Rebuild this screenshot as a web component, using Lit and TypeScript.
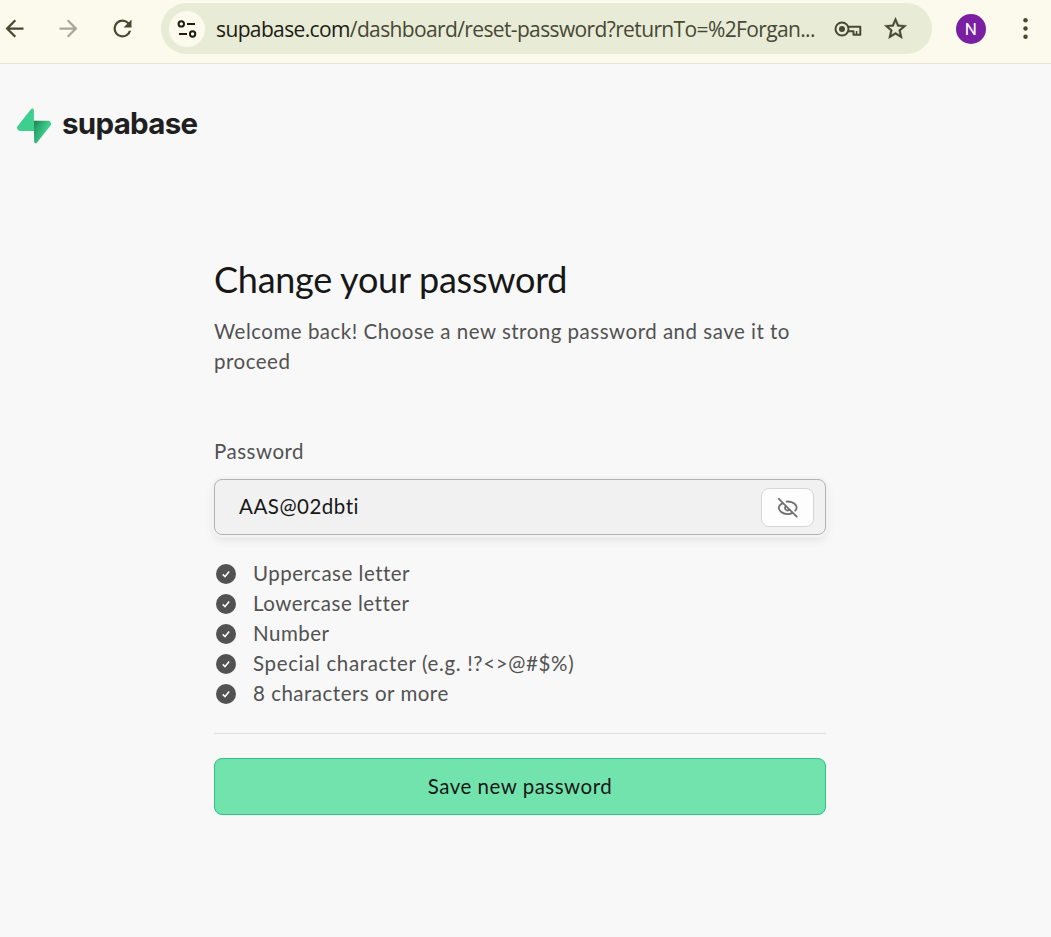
import { LitElement, html, css, svg } from "lit";
import { customElement } from "lit/decorators.js";

const icon = (size: number, body: unknown) =>
  html`<svg width=${size} height=${size} viewBox="0 0 24 24">${body}</svg>`;

@customElement("browser-bar")
class BrowserBar extends LitElement {
  static styles = css`
    :host {
      display: flex;
      align-items: center;
      height: 64px;
      padding: 0 12px 6px 0;
      border-bottom: 1px solid #e6e4d2;
      background: #fcfaec;
      color: #464a30;
    }
    svg { display: block; fill: currentColor; flex: none; }
    .nav { display: flex; gap: 27px; padding-left: 0.5px; }
    .muted { color: #a8a898; }
    .pill {
      display: flex;
      flex: none;
      align-items: center;
      box-sizing: border-box;
      width: 771px;
      height: 51px;
      margin: 0 0 0 25.5px;
      padding: 0 22px 0 8px;
      border-radius: 26px;
      background: #e8ebd6;
      color: #474836;
    }
    .site {
      display: grid;
      place-items: center;
      width: 36px;
      height: 36px;
      border-radius: 50%;
      background: #fcfaec;
      color: #1d1d14;
      margin-right: 11px;
    }
    .url {
      flex: none;
      width: 618px;
      white-space: nowrap;
      font: 21px/30px "Open Sans", "Noto Sans", sans-serif;
      letter-spacing: -0.63px;
    }
    .host { color: #1c1c14; }
    .key { margin-right: 20px; }
    .avatar {
      display: grid;
      place-items: center;
      flex: none;
      width: 30px;
      height: 30px;
      margin-left: 24px;
      border-radius: 50%;
      background: #7b1fa2;
      color: #fff;
      font: 17px/30px Roboto, sans-serif;
    }
    .menu { margin-left: 25.5px; }
    .nav, .menu { padding-top: 0.5px; }
    .avatar { margin-top: 1px; }
  `;
  render() {
    return html`
      <div class="nav">
        ${icon(27, svg`<path d="M20 11H7.83l5.59-5.59L12 4l-8 8 8 8 1.41-1.41L7.83 13H20v-2z"/>`)}
        <span class="muted">${icon(27, svg`<path d="M12 4l-1.41 1.41L16.17 11H4v2h12.17l-5.58 5.59L12 20l8-8z"/>`)}</span>
        ${icon(27, svg`<path d="M17.65 6.35A7.96 7.96 0 0 0 12 4a8 8 0 1 0 7.73 10h-2.08A6 6 0 1 1 12 6c1.66 0 3.14.69 4.22 1.78L13 11h7V4z"/>`)}
      </div>
      <div class="pill">
        <span class="site">
          <svg width="20" height="18" viewBox="0 0 20 18" fill="none" stroke="currentColor" stroke-width="2">
            <circle cx="4.3" cy="3.9" r="2.7" style="fill:none"></circle>
            <path d="M10 3.9h8M2 14h8"></path>
            <circle cx="15.6" cy="14" r="2.7" style="fill:none"></circle>
          </svg>
        </span>
        <span class="url"><span class="host">supabase.com</span>/dashboard/reset-password?returnTo=%2Forgan...</span>
        <svg class="key" width="28" height="18" viewBox="0 0 28 18">
          <circle cx="8" cy="9" r="6.5" style="fill:none" stroke="currentColor" stroke-width="2"></circle>
          <circle cx="8" cy="9" r="3"></circle>
          <path d="M14 6.7h12.3v8h-6.8v-3.4h-5" style="fill:none" stroke="currentColor" stroke-width="2" stroke-linejoin="round"></path>
          <path d="M21.8 11h1.5v3h-1.5z"></path>
        </svg>
        ${icon(27, svg`<path stroke="currentColor" stroke-width=".3" d="M22 9.24l-7.19-.62L12 2 9.19 8.63 2 9.24l5.46 4.73L5.82 21 12 17.27 18.18 21l-1.63-7.03L22 9.24zM12 15.4l-3.76 2.27 1-4.28-3.32-2.88 4.38-.38L12 6.1l1.71 4.04 4.38.38-3.32 2.88 1 4.28L12 15.4z"/>`)}
      </div>
      <span class="avatar">N</span>
      <span class="menu">${icon(27, svg`<circle cx="12" cy="4.7" r="2"/><circle cx="12" cy="12" r="2"/><circle cx="12" cy="19.3" r="2"/>`)}</span>
    `;
  }
}

@customElement("brand-logo")
class BrandLogo extends LitElement {
  static styles = css`
    :host { display: flex; align-items: center; height: 36px; }
    svg { display: block; }
    .name {
      margin: -6px 0 0 11px;
      font: 700 29.5px/36px Inter, sans-serif;
      letter-spacing: -0.7px;
      color: #1f1f1f;
    }
  `;
  render() {
    return html`
      <svg width="34" height="36" viewBox="0 0 109 113">
        <defs>
          <linearGradient id="a" x1="54" y1="55" x2="94.2" y2="71.8" gradientUnits="userSpaceOnUse">
            <stop stop-color="#249361"></stop><stop offset="1" stop-color="#3ecf8e"></stop>
          </linearGradient>
          <linearGradient id="b" x1="36.2" y1="30.6" x2="54.5" y2="65.1" gradientUnits="userSpaceOnUse">
            <stop></stop><stop offset="1" stop-opacity="0"></stop>
          </linearGradient>
        </defs>
        <path fill="url(#a)" d="M63.7 110.3c-2.9 3.6-8.7 1.6-8.7-3L54 40h45.2c8.2 0 12.8 9.5 7.7 15.9L63.7 110.3z"></path>
        <path fill="url(#b)" fill-opacity=".2" d="M63.7 110.3c-2.9 3.6-8.7 1.6-8.7-3L54 40h45.2c8.2 0 12.8 9.5 7.7 15.9L63.7 110.3z"></path>
        <path fill="#3ecf8e" d="M45.3 2.1c2.9-3.6 8.7-1.7 8.7 3l.5 67.2H9.8c-8.2 0-12.7-9.5-7.6-15.9L45.3 2.1z"></path>
      </svg>
      <span class="name">supabase</span>
    `;
  }
}

@customElement("app-root")
class AppRoot extends LitElement {
  static styles = css`
    :host {
      display: block;
      min-height: 937px;
      background: #f8f8f8;
      color: #525252;
      font: 20.5px/30px Lato, sans-serif;
      letter-spacing: 0.5px;
    }
    * { box-sizing: border-box; }
    svg { display: block; }
    .logo { padding: 44px 0 0 17px; }
    .form { width: 612px; margin: 115px 0 0 214px; white-space: nowrap; }
    h1 {
      margin: 0;
      font-size: 36px;
      line-height: 40px;
      font-weight: 400;
      letter-spacing: -0.25px;
      color: #171717;
    }
    p { margin: 17px 0 0; }
    .label { display: block; margin-top: 60px; }
    .field {
      display: flex;
      align-items: center;
      justify-content: space-between;
      height: 56px;
      margin-top: 13px;
      padding: 0 11px 0 24px;
      border: 1px solid #b2b2b2;
      border-radius: 8px;
      background: #f1f1f1;
      color: #171717;
      box-shadow: 0 0 0 2.5px #f3f3f3, 0 5px 8px 1px rgba(0, 0, 0, 0.08);
    }
    .value { margin-top: -3px; }
    .eye {
      display: grid;
      place-items: center;
      width: 53px;
      height: 39px;
      padding: 0;
      margin-top: 1px;
      border: 1px solid #d6d6d6;
      border-radius: 8px;
      background: #fdfdfd;
      color: #707070;
    }
    ul { list-style: none; margin: 23px 0 0; padding: 0; }
    li { display: flex; align-items: center; gap: 17px; padding-left: 2px; }
    li svg { margin-top: 2px; }
    .symbols { letter-spacing: 0.65px; }
    hr { margin: 25px 0 24px; border: 0; height: 1px; background: #dfdfdf; }
    .save {
      display: block;
      width: 100%;
      height: 57px;
      padding: 0 0 2px;
      border: 1px solid #2bc282;
      border-radius: 8px;
      background: #72e3ad;
      color: #171717;
      font: inherit;
      letter-spacing: 0.5px;
    }
  `;
  rules = [
    "Uppercase letter",
    "Lowercase letter",
    "Number",
    "Special character (e.g. !?<>@#$%)",
    "8 characters or more",
  ];
  render() {
    return html`
      <browser-bar></browser-bar>
      <div class="logo"><brand-logo></brand-logo></div>
      <main class="form">
        <h1>Change your password</h1>
        <p>Welcome back! Choose a new strong password and save it to<br />proceed</p>
        <span class="label">Password</span>
        <div class="field">
          <span class="value">AAS@02dbti</span>
          <button class="eye" aria-label="Hide password">
            <svg width="21.5" height="21.5" viewBox="0 0 24 24" fill="none" stroke="currentColor" stroke-width="2" stroke-linecap="round" stroke-linejoin="round">
              <path d="M9.88 9.88a3 3 0 1 0 4.24 4.24M10.73 5.08A10.43 10.43 0 0 1 12 5c7 0 10 4.5 10 7a6.5 6.5 0 0 1-1.67 3.3M6.61 6.61C3.6 8.2 2 10.3 2 12c0 2.500 3 7 10 7a12 12 0 0 0 5.39-1.310M2 2l20 20"></path>
            </svg>
          </button>
        </div>
        <ul>
          ${this.rules.map(
            (r) => html`<li>
              <svg width="20" height="20" viewBox="0 0 20 20">
                <circle cx="10" cy="10" r="10" fill="#525252"></circle>
                <path d="M6.7 10.4l2.3 2.2 4.2-5" fill="none" stroke="#f8f8f8" stroke-width="1.6"></path>
              </svg>
              <span class=${r.includes("@") ? "symbols" : ""}>${r}</span>
            </li>`
          )}
        </ul>
        <hr />
        <button class="save">Save new password</button>
      </main>
    `;
  }
}
